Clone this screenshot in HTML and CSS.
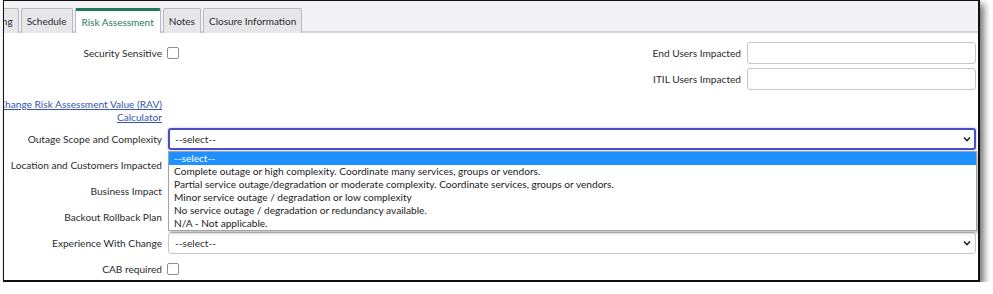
FILE: index.html
```html
<!DOCTYPE html>
<html lang="en">
<head>
<meta charset="utf-8">
<title>Risk Assessment</title>
<link rel="stylesheet" href="styles.css">
</head>
<body>
<div class="frame">
  <div class="tabbar">
    <div class="tabs">
      <span class="tab tab-first">Planning</span>
      <span class="tab">Schedule</span>
      <span class="tab active">Risk Assessment</span>
      <span class="tab">Notes</span>
      <span class="tab">Closure Information</span>
    </div>
  </div>
  <div class="form">
    <div class="top">
      <div class="row">
        <span class="lbl">Security Sensitive</span>
        <span class="ctl"><span class="checkbox"></span></span>
      </div>
      <div class="right">
        <div class="pair"><span class="lbl">End Users Impacted</span><span class="input"></span></div>
        <div class="pair"><span class="lbl">ITIL Users Impacted</span><span class="input"></span></div>
      </div>
    </div>
    <div class="row link-row">
      <span class="lbl"><a href="#" class="link">Change Risk Assessment Value (RAV) Calculator</a></span>
    </div>
    <div class="row">
      <span class="lbl">Outage Scope and Complexity</span>
      <div class="ctl ctl-rel">
        <div class="select focused"><span>--select--</span>
          <svg class="chev" width="8" height="6" viewBox="0 0 8 6"><polyline points="1,1.5 4,4.5 7,1.5" fill="none" stroke="#222" stroke-width="1.6"/></svg>
        </div>
        <ul class="listbox">
          <li class="opt sel">--select--</li>
          <li class="opt">Complete outage or high complexity. Coordinate many services, groups or vendors.</li>
          <li class="opt">Partial service outage/degradation or moderate complexity. Coordinate services, groups or vendors.</li>
          <li class="opt">Minor service outage / degradation or low complexity</li>
          <li class="opt">No service outage / degradation or redundancy available.</li>
          <li class="opt">N/A - Not applicable.</li>
        </ul>
      </div>
    </div>
    <div class="row"><span class="lbl">Location and Customers Impacted</span><div class="ctl"></div></div>
    <div class="row"><span class="lbl">Business Impact</span><div class="ctl"></div></div>
    <div class="row"><span class="lbl">Backout Rollback Plan</span><div class="ctl"></div></div>
    <div class="row">
      <span class="lbl">Experience With Change</span>
      <div class="ctl">
        <div class="select"><span>--select--</span>
          <svg class="chev" width="8" height="6" viewBox="0 0 8 6"><polyline points="1,1.5 4,4.5 7,1.5" fill="none" stroke="#222" stroke-width="1.6"/></svg>
        </div>
      </div>
    </div>
    <div class="row">
      <span class="lbl">CAB required</span>
      <span class="ctl"><span class="checkbox"></span></span>
    </div>
  </div>
</div>
</body>
</html>
```

FILE: styles.css
```css
html, body {
  margin: 0;
  padding: 0;
  background: #ffffff;
}
body {
  font-family: Lato, "Open Sans", "Liberation Sans", sans-serif;
  font-size: 10.15px;
  color: #2b2b2b;
}
.frame {
  margin-left: 3px;
  width: 977px;
  height: 282px;
  box-sizing: border-box;
  border: 1px solid #111111;
  border-right-width: 2px;
  border-bottom-width: 2px;
  background: #ffffff;
  overflow: hidden;
  box-shadow: 4px 4px 7px rgba(0, 0, 0, 0.55);
}
.tabbar {
  height: 32px;
  box-sizing: border-box;
  background: #f3f3f5;
  border-bottom: 2px solid #d3d4d8;
  display: flex;
  align-items: flex-end;
}
.tabs {
  display: flex;
  gap: 2px;
  margin-left: -35px;
  margin-bottom: -2px;
  font-size: 10px;
}
.tab {
  height: 25px;
  box-sizing: border-box;
  padding: 0 5px;
  display: flex;
  align-items: center;
  background: #e7e7ea;
  border: 1px solid #b9babe;
  border-bottom: none;
  border-radius: 2px 2px 0 0;
  color: #2b2b2b;
  white-space: nowrap;
}
.tab.active {
  background: #ffffff;
  border-top: 3px solid #1d7a55;
  color: #2a7a5a;
  padding: 0 6px;
}
.form {
  margin-left: -32px;
  padding: 9px 2px 0 0;
  display: flex;
  flex-direction: column;
  gap: 4px;
}
.top {
  display: flex;
  align-items: flex-start;
}
.top > .row {
  flex: 1;
}
.right {
  display: flex;
  flex-direction: column;
  gap: 4px;
}
.pair {
  display: flex;
  align-items: center;
  justify-content: flex-end;
  gap: 6px;
  height: 22px;
}
.input {
  width: 229px;
  height: 22px;
  box-sizing: border-box;
  border: 1px solid #c3c6cb;
  border-radius: 3px;
  background: #fff;
}
.row {
  display: grid;
  grid-template-columns: 190px 1fr;
  column-gap: 6px;
  align-items: center;
  height: 22px;
}
.lbl {
  text-align: right;
  white-space: nowrap;
}
.link-row {
  height: 26px;
  margin-top: 4px;
  line-height: 13px;
}
.link-row .lbl {
  white-space: normal;
}
.link {
  color: #3556aa;
  text-decoration: underline;
}
.ctl {
  display: flex;
  align-items: center;
}
.ctl-rel {
  position: relative;
  display: block;
}
.checkbox {
  width: 12px;
  height: 12px;
  box-sizing: border-box;
  border: 1px solid #8e8e92;
  border-radius: 2px;
  background: #fff;
  margin-left: -1px;
}
.select {
  width: 100%;
  height: 22px;
  box-sizing: border-box;
  border: 1px solid #c3c6cb;
  border-radius: 3px;
  background: #fff;
  display: flex;
  align-items: center;
  justify-content: space-between;
  padding: 0 4px 0 6px;
  color: #2b2b2b;
}
.select.focused {
  border: 2px solid #4a4ec4;
  padding-left: 5px;
  padding-right: 3px;
  box-shadow: 0 0 2px 1px rgba(120, 130, 220, 0.25);
}
.listbox {
  position: absolute;
  top: 23px;
  left: 0;
  right: -1px;
  margin: 0;
  padding: 0;
  list-style: none;
  background: #fff;
  border: 1px solid #a3a3a6;
  box-shadow: 2px 2px 3px rgba(0, 0, 0, 0.25);
  z-index: 5;
}
.opt {
  height: 13px;
  line-height: 13px;
  padding-left: 5px;
  color: #222;
  white-space: nowrap;
}
.opt.sel {
  background: #1e90ff;
  color: #fff;
}
```
